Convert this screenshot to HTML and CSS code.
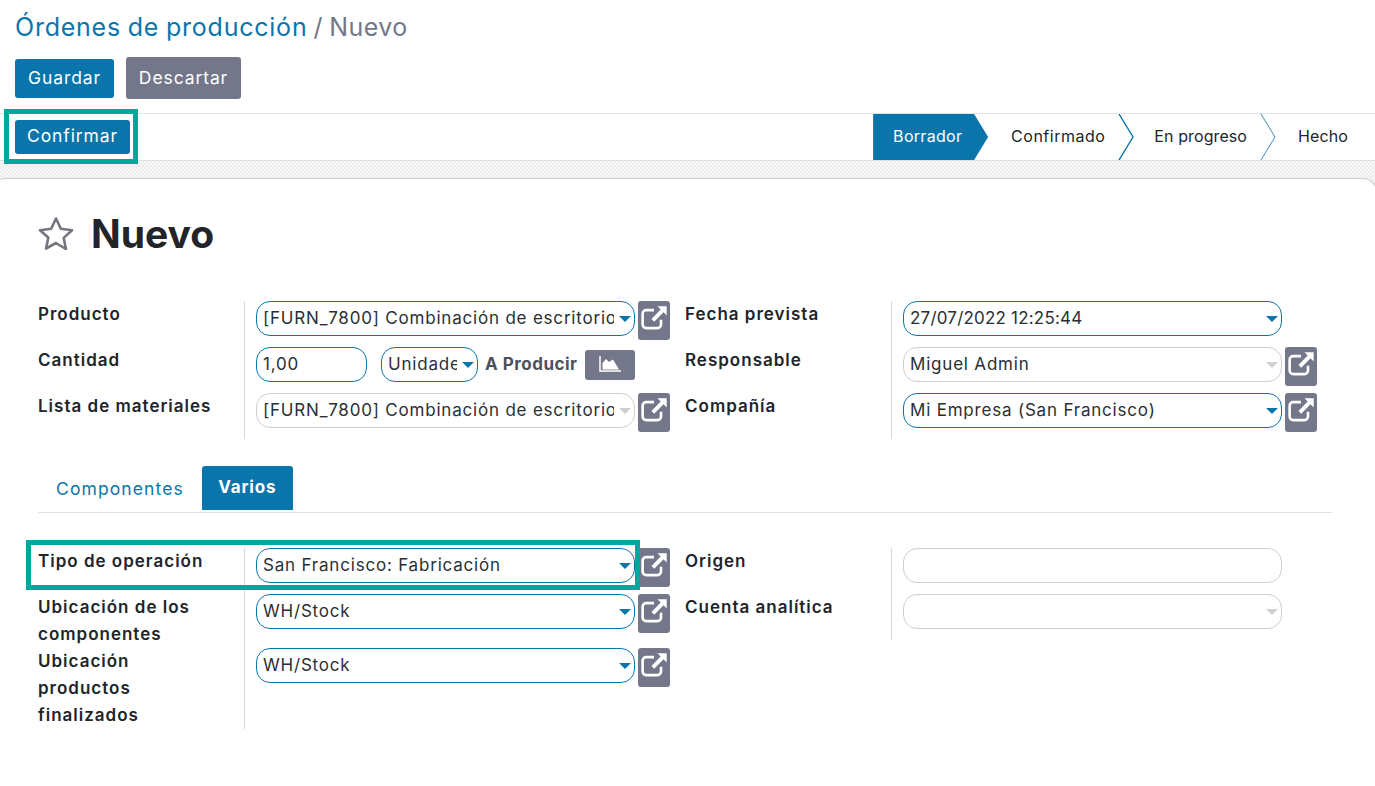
FILE: index.html
```html
<!DOCTYPE html>
<html lang="es">
<head>
    <meta charset="UTF-8">
    <title>Órdenes de producción / Nuevo</title>
    <link rel="stylesheet" href="styles.css">
</head>
<body>
    <svg class="icon-defs" width="0" height="0">
        <symbol id="ext" viewBox="0 0 32 32">
            <path d="M24 18v5.500a4 4 0 0 1-4 4H7a4 4 0 0 1-4-4V11a4 4 0 0 1 4-4h9" fill="none" stroke="currentColor" stroke-width="3"/>
            <path d="M20 2.500h10.500V13l-3.600-3.600-10.600 10.800-3.200-3.200L23.600 6.200z" fill="currentColor"/>
        </symbol>
    </svg>

    <header class="control-panel">
        <h1 class="breadcrumb"><a href="#">Órdenes de producción</a> <span>/ Nuevo</span></h1>
        <div class="actions">
            <button class="btn btn-primary btn-save" type="button">Guardar</button>
            <button class="btn btn-secondary btn-discard" type="button">Descartar</button>
        </div>
    </header>

    <div class="statusbar">
        <div class="statusbar-left">
            <button class="btn btn-primary btn-confirm" type="button">Confirmar</button>
            <div class="highlight highlight-confirm"></div>
        </div>
        <div class="steps">
            <span class="step step-active">Borrador</span>
            <span class="step step-first">Confirmado</span>
            <svg class="chevron chevron-strong" width="16" height="46" viewBox="0 0 16 46"><path d="M1 0l14 23L1 46" fill="none" stroke="currentColor" stroke-width="1.400"/></svg>
            <span class="step step-mid">En progreso</span>
            <svg class="chevron" width="16" height="46" viewBox="0 0 16 46"><path d="M1 0l14 23L1 46" fill="none" stroke="currentColor"/></svg>
            <span class="step step-last">Hecho</span>
        </div>
    </div>

    <div class="backdrop">
        <main class="sheet">
            <div class="title-row">
                <svg class="star" width="36" height="34" viewBox="0 0 36 34"><path d="M18 2.500l4.800 10.300 11.200 1.400-8.300 7.700 2.200 11.100L18 27l-9.900 5.500 2.200-11.100L2 14.200l11.200-1.400z" fill="none" stroke="#74767f" stroke-width="2.600" stroke-linejoin="round"/></svg>
                <h2>Nuevo</h2>
            </div>

            <div class="group">
                <div class="col">
                    <label class="label">Producto</label>
                    <div class="value">
                        <div class="field"><span class="text">[FURN_7800] Combinación de escritorio</span><i class="caret"></i></div>
                        <button class="ext" type="button"><svg width="28" height="28"><use href="#ext"/></svg></button>
                    </div>
                    <label class="label">Cantidad</label>
                    <div class="value">
                        <div class="field field-qty"><span class="text">1,00</span></div>
                        <div class="field field-uom"><span class="text">Unidades</span><i class="caret"></i></div>
                        <b class="to-produce">A Producir</b>
                        <button class="chart" type="button">
                            <svg width="22" height="16" viewBox="0 0 22 16"><path d="M1 0v15h21" fill="none" stroke="currentColor" stroke-width="1.500"/><path d="M3.500 13.500V7L7 3l3 3 4-2.500 6 10z" fill="currentColor"/></svg>
                        </button>
                    </div>
                    <label class="label">Lista de materiales</label>
                    <div class="value">
                        <div class="field field-off"><span class="text">[FURN_7800] Combinación de escritorio</span><i class="caret"></i></div>
                        <button class="ext" type="button"><svg width="28" height="28"><use href="#ext"/></svg></button>
                    </div>
                </div>
                <div class="col">
                    <label class="label">Fecha prevista</label>
                    <div class="value">
                        <div class="field"><span class="text text-date">27/07/2022 12:25:44</span><i class="caret"></i></div>
                    </div>
                    <label class="label">Responsable</label>
                    <div class="value">
                        <div class="field field-off"><span class="text">Miguel Admin</span><i class="caret"></i></div>
                        <button class="ext" type="button"><svg width="28" height="28"><use href="#ext"/></svg></button>
                    </div>
                    <label class="label">Compañía</label>
                    <div class="value">
                        <div class="field"><span class="text">Mi Empresa (San Francisco)</span><i class="caret"></i></div>
                        <button class="ext" type="button"><svg width="28" height="28"><use href="#ext"/></svg></button>
                    </div>
                </div>
            </div>

            <nav class="tabs">
                <a class="tab" href="#">Componentes</a>
                <a class="tab tab-active" href="#">Varios</a>
            </nav>

            <div class="group group-misc">
                <div class="highlight highlight-type"></div>
                <div class="col">
                    <label class="label">Tipo de operación</label>
                    <div class="value">
                        <div class="field"><span class="text">San Francisco: Fabricación</span><i class="caret"></i></div>
                        <button class="ext" type="button"><svg width="28" height="28"><use href="#ext"/></svg></button>
                    </div>
                    <label class="label">Ubicación de los componentes</label>
                    <div class="value value-tight">
                        <div class="field"><span class="text">WH/Stock</span><i class="caret"></i></div>
                        <button class="ext" type="button"><svg width="28" height="28"><use href="#ext"/></svg></button>
                    </div>
                    <label class="label">Ubicación productos finalizados</label>
                    <div class="value value-tight">
                        <div class="field"><span class="text">WH/Stock</span><i class="caret"></i></div>
                        <button class="ext" type="button"><svg width="28" height="28"><use href="#ext"/></svg></button>
                    </div>
                </div>
                <div class="col col-top">
                    <label class="label">Origen</label>
                    <div class="value">
                        <div class="field field-off"><span class="text"></span></div>
                    </div>
                    <label class="label">Cuenta analítica</label>
                    <div class="value">
                        <div class="field field-off"><span class="text"></span><i class="caret"></i></div>
                    </div>
                </div>
            </div>
        </main>
    </div>
</body>
</html>
```

FILE: styles.css
```css
/* General */
body {
    margin: 0;
    font-family: 'Inter', 'Noto Sans', sans-serif;
    font-size: 16px;
    color: #212529;
    background-color: #fff;
    overflow: hidden;
}

.icon-defs {
    position: absolute;
}

/* Header with breadcrumb and save buttons */
.control-panel {
    padding: 13px 15px 14px;
}

.breadcrumb {
    margin: 0;
    height: 28px;
    font-size: 25px;
    line-height: 28px;
    font-weight: 400;
    word-spacing: -1px;
    color: #74778a;
}

.breadcrumb a {
    color: #0a75ab;
    text-decoration: none;
    letter-spacing: 0.77px;
}

.breadcrumb span {
    letter-spacing: 0.4px;
}

.actions {
    display: flex;
    align-items: center;
    gap: 12px;
    margin-top: 16px;
    height: 42px;
}

.btn {
    border: none;
    border-radius: 3px;
    color: #fff;
    font-family: inherit;
    font-size: 17.500px;
    padding: 0 0 2px;
    letter-spacing: 0.9px;
}

.btn-primary {
    background-color: #0a75ab;
}

.btn-secondary {
    background-color: #74778a;
}

.btn-save {
    width: 99px;
    height: 39px;
}

.btn-discard {
    width: 115px;
    height: 42px;
}

.btn-confirm {
    width: 115px;
    height: 34px;
    padding-bottom: 4px;
}

/* Status bar */
.statusbar {
    display: flex;
    justify-content: space-between;
    height: 46px;
    border-top: 1px solid #dee2e6;
    border-bottom: 1px solid #dee2e6;
}

.statusbar-left {
    position: relative;
    padding: 6px 15px;
}

.highlight {
    position: absolute;
    border: 5px solid #00a79d;
    box-sizing: border-box;
    pointer-events: none;
}

.highlight-confirm {
    left: 4px;
    top: -5px;
    width: 134px;
    height: 55px;
}

.steps {
    display: flex;
    align-items: center;
    padding-right: 27px;
    font-size: 16px;
    letter-spacing: 0.3px;
}

.step {
    padding: 0 13px 2px 22px;
}

.step-first {
    padding-left: 23px;
    letter-spacing: 0.5px;
}

.step-mid {
    padding-left: 20px;
    letter-spacing: 0.1px;
}

.step-last {
    padding-right: 0;
    letter-spacing: 0.1px;
}

.step-active {
    display: flex;
    align-items: center;
    box-sizing: border-box;
    width: 115px;
    height: 46px;
    padding: 0 0 2px 20px;
    color: #fff;
    background-color: #0a75ab;
    clip-path: polygon(0 0, 101px 0, 115px 50%, 101px 100%, 0 100%);
}

.chevron {
    color: #3d8fbd;
    flex: none;
}

.chevron-strong {
    color: #0a75ab;
}

/* Textured strip behind the form sheet */
.backdrop {
    height: 640px;
    padding-top: 17px;
    box-sizing: border-box;
    background-color: #fff;
    background-image: repeating-conic-gradient(#ececec 0 25%, #f8f8f8 0 50%);
    background-size: 4px 4px;
}

.sheet {
    height: 100%;
    margin-left: -9px;
    margin-right: -2px;
    padding: 0 43px 0 46px;
    background-color: #fff;
    border-top: 1px solid #c9ccd2;
    border-left: 1px solid #c9ccd2;
    border-right: 1px solid #c9ccd2;
    border-radius: 14px 14px 0 0;
}

.title-row {
    display: flex;
    align-items: center;
    gap: 17px;
    height: 44px;
    margin-top: 33px;
    margin-bottom: 45px;
}

.star {
    margin-bottom: 2px;
}

.title-row h2 {
    margin: 0;
    font-size: 39px;
    line-height: 44px;
    font-weight: 700;
    color: #212529;
}

/* Form groups */
.group {
    position: relative;
    display: flex;
}

.col {
    display: grid;
    grid-template-columns: 206px 1fr;
    align-content: start;
    width: 647px;
    flex: none;
}

.label {
    font-weight: 600;
    font-size: 17px;
    line-height: 27px;
    letter-spacing: 1px;
    padding-right: 20px;
}

.value {
    display: flex;
    align-items: flex-start;
    height: 35px;
    padding: 0 0 11px 11px;
    border-left: 1px solid #d9d9d9;
}

.value-tight {
    height: auto;
    min-height: 35px;
    padding-bottom: 0;
}

.field {
    display: flex;
    align-items: center;
    box-sizing: border-box;
    width: 379px;
    height: 35px;
    padding: 0 7px 0 6px;
    border: 1px solid #0a75ab;
    border-radius: 14px;
    flex: none;
}

.field-off {
    border-color: #cfcfcf;
}

.field-off .caret {
    border-top-color: #cfcfcf;
}

.field-qty {
    width: 111px;
    margin-right: 14px;
}

.field-uom {
    width: 97px;
}

.text {
    flex: 1;
    min-width: 0;
    overflow: hidden;
    white-space: nowrap;
    font-size: 17px;
    line-height: 33px;
    letter-spacing: 0.8px;
    color: #2b2f33;
}

.text-date {
    letter-spacing: 0.2px;
}

.caret {
    flex: none;
    margin-left: 5px;
    margin-right: -4px;
    border-top: 6px solid #0a75ab;
    border-left: 6px solid transparent;
    border-right: 6px solid transparent;
}

.ext {
    display: flex;
    align-items: center;
    justify-content: center;
    box-sizing: border-box;
    width: 32px;
    height: 39px;
    margin-left: 3px;
    padding: 0 0 6px;
    border: none;
    border-radius: 3px;
    background-color: #74778a;
    color: #fff;
    flex: none;
}

.to-produce {
    margin-left: 7px;
    font-size: 17px;
    line-height: 35px;
    letter-spacing: 0.5px;
    color: #4e525b;
    white-space: nowrap;
}

.chart {
    display: flex;
    align-items: center;
    justify-content: center;
    width: 50px;
    height: 30px;
    margin-left: 7px;
    margin-top: 3px;
    padding: 0 0 3px;
    border: none;
    border-radius: 3px;
    background-color: #74778a;
    color: #fff;
    flex: none;
}

/* Tabs */
.tabs {
    display: flex;
    height: 46px;
    margin-top: 27px;
    border-bottom: 1px solid #dee2e6;
    width: 1294px;
}

.tab {
    box-sizing: border-box;
    height: 44px;
    padding: 12px 18px 0;
    font-size: 17.500px;
    line-height: 22px;
    color: #0a75ab;
    text-decoration: none;
    letter-spacing: 1.100px;
}

.tab-active {
    width: 91px;
    padding: 10px 0 0;
    text-align: center;
    background-color: #0a75ab;
    border-radius: 3px 3px 0 0;
    color: #fff;
    font-size: 17px;
    letter-spacing: 0.8px;
    font-weight: 700;
}

.group-misc {
    margin-top: 35px;
}

.highlight-type {
    left: -12px;
    top: -8px;
    width: 614px;
    height: 50px;
}
```
